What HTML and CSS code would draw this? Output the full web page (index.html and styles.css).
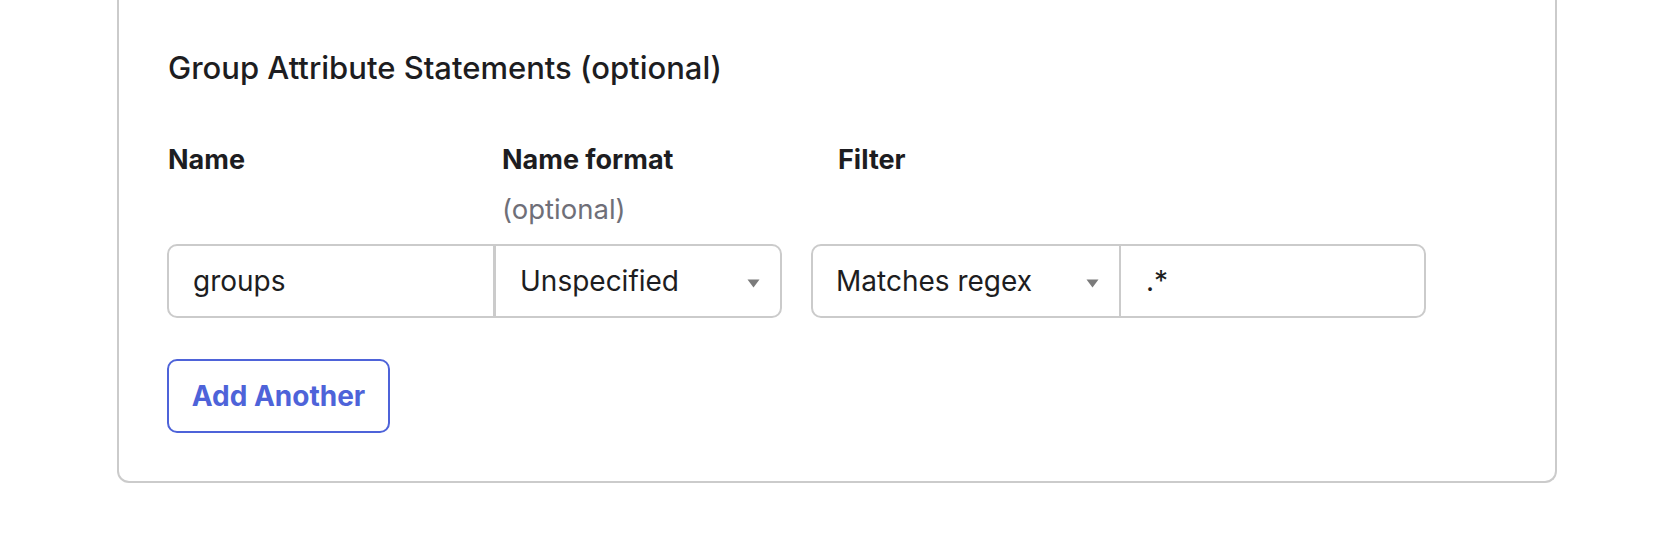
FILE: index.html
```html
<!DOCTYPE html>
<html lang="en">
<head>
<meta charset="utf-8">
<title>Group Attribute Statements</title>
<link rel="stylesheet" href="styles.css">
</head>
<body>
<div class="panel">
  <h2 class="title">Group Attribute Statements (optional)</h2>
  <div class="labels">
    <div class="lab lab-name"><span class="label">Name</span></div>
    <div class="lab lab-format"><span class="label">Name format</span><span class="hint">(optional)</span></div>
    <div class="lab lab-filter"><span class="label">Filter</span></div>
  </div>
  <div class="fields">
    <div class="group group-a">
      <div class="field text name-input">groups</div>
      <div class="field select format-select">
        <span>Unspecified</span>
        <svg class="caret" width="13" height="9" viewBox="0 0 13 9"><path d="M0.5 0.5 H12.5 L6.5 8.5 Z" fill="#7b7b7b"/></svg>
      </div>
    </div>
    <div class="group group-b">
      <div class="field select filter-select">
        <span>Matches regex</span>
        <svg class="caret" width="13" height="9" viewBox="0 0 13 9"><path d="M0.5 0.5 H12.5 L6.5 8.5 Z" fill="#7b7b7b"/></svg>
      </div>
      <div class="field text regex-input">.*</div>
    </div>
  </div>
  <button class="add" type="button">Add Another</button>
</div>
</body>
</html>
```

FILE: styles.css
```css
* { box-sizing: border-box; }

html, body {
  margin: 0;
  padding: 0;
  background: #ffffff;
}

body {
  font-family: Inter, "Noto Sans", "Liberation Sans", sans-serif;
  color: #1d1d21;
}

.panel {
  margin-left: 117px;
  width: 1440px;
  border: 2px solid #cbcbcb;
  border-top: 0;
  border-radius: 0 0 12px 12px;
  padding: 50px 0 48px 48px;
}

.title {
  margin: 0;
  font-size: 31px;
  line-height: 36px;
  font-weight: 500;
  padding-left: 1px;
}

.labels {
  display: grid;
  grid-template-columns: 334px 336px 1fr;
  margin-top: 56px;
  padding-left: 1px;
}

.lab {
  display: flex;
  flex-direction: column;
}

.label {
  font-size: 27px;
  line-height: 36px;
  font-weight: 700;
}

.hint {
  font-size: 27.5px;
  line-height: 36px;
  color: #6f6f78;
  margin-top: 13px;
}

.fields {
  display: flex;
  gap: 29px;
  margin-top: 17px;
}

.group {
  display: flex;
  width: 615px;
  height: 74px;
  border: 2px solid #cbcbcb;
  border-radius: 10px;
}

.field {
  display: flex;
  align-items: center;
  height: 100%;
  padding: 0 24px;
  font-size: 28px;
}

.name-input {
  width: 327px;
  border-right: 3px solid #cbcbcb;
}

.format-select {
  flex: 1;
}

.select {
  justify-content: space-between;
  padding-right: 20px;
}

.filter-select {
  width: 308px;
  border-right: 2px solid #cbcbcb;
  padding-left: 23px;
}

.regex-input {
  flex: 1;
  padding-left: 25px;
}

.caret {
  display: block;
  margin-top: 4px;
}

.add {
  display: block;
  margin-top: 41px;
  height: 74px;
  width: 223px;
  padding: 0;
  background: #ffffff;
  border: 2px solid #4e63d9;
  border-radius: 10px;
  color: #4e63d9;
  font-family: Inter, "Noto Sans", "Liberation Sans", sans-serif;
  font-size: 28px;
  font-weight: 700;
}
```
